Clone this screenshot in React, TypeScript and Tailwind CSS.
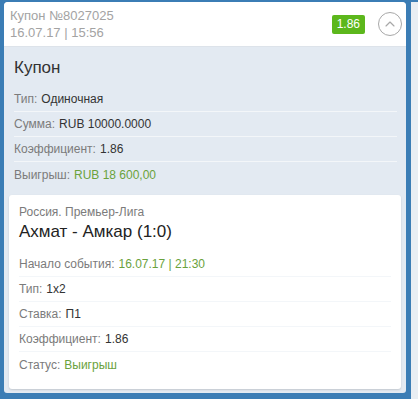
import { ChevronUp } from "lucide-react";

const couponRows = [
  { label: "Тип:", value: "Одиночная" },
  { label: "Сумма:", value: "RUB 10000.0000" },
  { label: "Коэффициент:", value: "1.86" },
  { label: "Выигрыш:", value: "RUB 18 600,00", green: true },
];

const eventRows = [
  { label: "Начало события:", value: "16.07.17 | 21:30", green: true },
  { label: "Тип:", value: "1x2" },
  { label: "Ставка:", value: "П1" },
  { label: "Коэффициент:", value: "1.86" },
  { label: "Статус:", value: "Выигрыш", green: true },
];

function Row({ label, value, green }: { label: string; value: string; green?: boolean }) {
  return (
    <div className="flex h-[25px] shrink-0 items-center border-b border-[#f3f6f9] last:border-b-0 text-[12px]">
      <span className="text-[#7b7b7b]">{label}</span>
      <span className={green ? "ml-1 text-[#6aa23c]" : "ml-1 text-[#333]"}>{value}</span>
    </div>
  );
}

export default function App() {
  return (
    <div
      className="flex h-[399px] w-[418px] items-start overflow-hidden bg-[#3b7db5] pl-[4px] pt-[2px]"
      style={{ fontFamily: '"Liberation Sans", Arial, sans-serif' }}
    >
      <div className="flex w-[402px] shrink-0 flex-col">
        <div className="flex shrink-0 flex-col overflow-hidden rounded-t-[4px] rounded-b-[3px] bg-[#e3eaf2]">
          <div className="flex h-[45px] shrink-0 items-center border-b border-[#dde3ea] bg-white pl-[6px] pr-[4px]">
            <div className="flex flex-col text-[13px] leading-[17px] text-[#a3a3a3]">
              <span>Купон №8027025</span>
              <span>16.07.17 | 15:56</span>
            </div>
            <span className="ml-auto mr-[13px] flex h-[19px] items-center rounded-[2px] bg-[#5cb71c] px-[5px] text-[12px] text-white">
              1.86
            </span>
            <span className="flex h-[24px] w-[24px] items-center justify-center rounded-full border-[1.5px] border-[#a8a8a8] text-[#a8a8a8]">
              <ChevronUp size={16} strokeWidth={1.75} />
            </span>
          </div>
          <div className="pl-[10px] pr-[9px] pt-[11px]">
            <div className="text-[17px] leading-[20px] text-[#333]">Купон</div>
            <div className="mt-[9px] flex flex-col">
              {couponRows.map((r) => (
                <Row key={r.label} {...r} />
              ))}
            </div>
          </div>
          <div className="mx-[5px] mb-[4px] mt-[8px] rounded-[3px] bg-white px-[10px] pb-[12px] pt-[9px] shadow-[0_1px_2px_rgba(0,0,0,0.15)]">
            <div className="text-[12px] leading-[16px] text-[#7b7b7b]">Россия. Премьер-Лига</div>
            <div className="mt-[2px] text-[17px] leading-[20px] text-[#222]">Ахмат - Амкар (1:0)</div>
            <div className="mt-[10px] flex flex-col">
              {eventRows.map((r) => (
                <Row key={r.label} {...r} />
              ))}
            </div>
          </div>
        </div>
        <div className="mt-[6px] h-[10px] shrink-0 rounded-t-[4px] bg-[#f3f8fc]" />
      </div>
      <div className="ml-[5px] h-full w-[7px] shrink-0 bg-[#e9eef3]" />
    </div>
  );
}
